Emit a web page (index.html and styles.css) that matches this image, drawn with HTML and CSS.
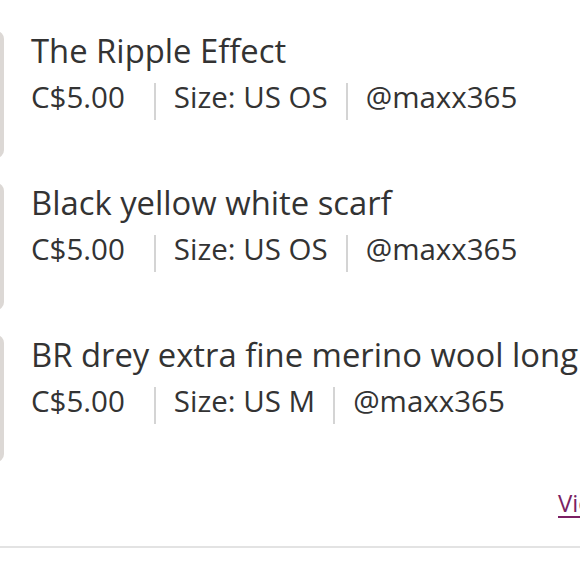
FILE: index.html
```html
<!DOCTYPE html>
<html>
<head>
<meta charset="utf-8">
<link rel="stylesheet" href="styles.css">
</head>
<body>
<div class="page">
  <div class="list">
    <div class="item">
      <div class="thumb"></div>
      <div class="info">
        <div class="title">The Ripple Effect</div>
        <div class="meta"><span class="price">C$5.00</span><span class="sep"></span><span>Size: US OS</span><span class="sep"></span><span>@maxx365</span></div>
      </div>
    </div>
    <div class="item">
      <div class="thumb"></div>
      <div class="info">
        <div class="title">Black yellow white scarf</div>
        <div class="meta"><span class="price">C$5.00</span><span class="sep"></span><span>Size: US OS</span><span class="sep"></span><span>@maxx365</span></div>
      </div>
    </div>
    <div class="item">
      <div class="thumb"></div>
      <div class="info">
        <div class="title">BR drey extra fine merino wool long scarf</div>
        <div class="meta"><span class="price">C$5.00</span><span class="sep"></span><span>Size: US M</span><span class="sep"></span><span>@maxx365</span></div>
      </div>
    </div>
  </div>
  <div class="footer"><a class="view-all" href="#">View All</a></div>
  <div class="rule"></div>
</div>
</body>
</html>
```
FILE: styles.css
```css
html, body {
  margin: 0;
  padding: 0;
  background: #fff;
  overflow: hidden;
}
.page {
  width: 580px;
  font-family: "Open Sans", "Liberation Sans", sans-serif;
  color: #333;
}
.list {
  display: flex;
  flex-direction: column;
  gap: 25px;
  padding-top: 31px;
}
.item {
  display: flex;
  align-items: flex-start;
  gap: 27px;
  height: 127px;
}
.thumb {
  flex: none;
  width: 128px;
  height: 127px;
  margin-left: -124px;
  border-radius: 8px;
  background: #dcd8d5;
}
.info {
  display: flex;
  flex-direction: column;
  white-space: nowrap;
}
.title {
  font-size: 32.8px;
  line-height: 36px;
  margin-top: 2px;
}
.meta {
  display: flex;
  align-items: flex-start;
  font-size: 29.5px;
  line-height: 40px;
  margin-top: 8px;
}
.price {
  margin-right: 11px;
}
.sep {
  width: 2px;
  height: 37px;
  margin: 6px 18px 0;
  background: #d4d4d4;
}
.footer {
  padding-left: 558px;
  margin-top: 26px;
  white-space: nowrap;
  font-size: 24px;
  line-height: 30px;
}
.view-all {
  color: #7b1f63;
  text-decoration: underline;
  text-underline-offset: 4px;
}
.rule {
  margin-top: 28px;
  height: 2px;
  background: #e3e3e3;
}
```
